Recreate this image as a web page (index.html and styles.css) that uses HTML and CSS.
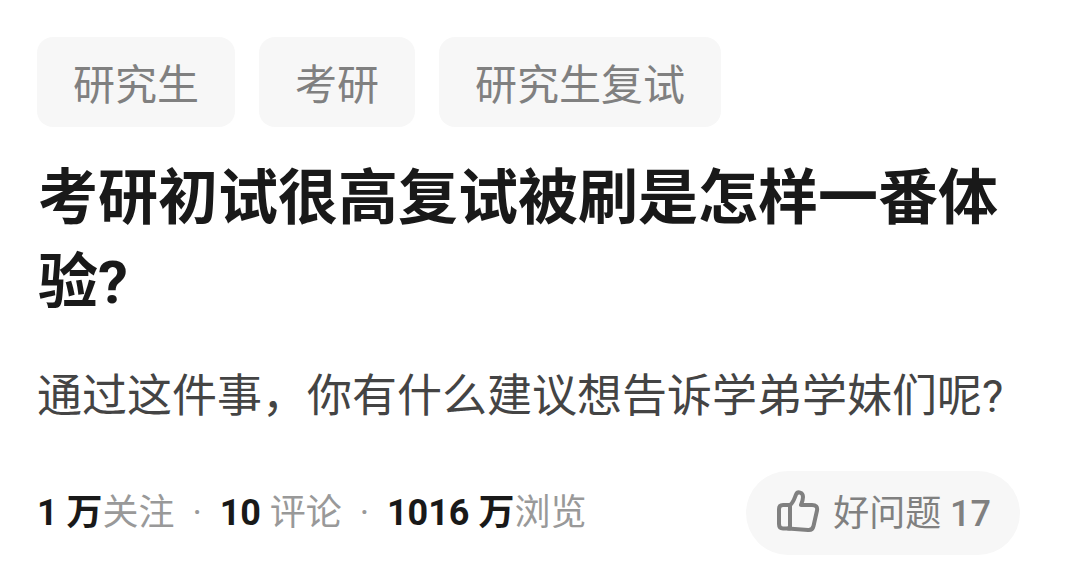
FILE: index.html
```html
<!DOCTYPE html>
<html lang="zh-CN">
<head>
    <meta charset="UTF-8">
    <meta name="viewport" content="width=device-width, initial-scale=1.0">
    <title>考研初试很高复试被刷是怎样一番体验?</title>
    <link rel="stylesheet" href="styles.css">
</head>
<body>
    <div class="question">
        <div class="tags">
            <a class="tag">研究生</a>
            <a class="tag">考研</a>
            <a class="tag">研究生复试</a>
        </div>

        <h1 class="title">考研初试很高复试被刷是怎样一番体验?</h1>

        <p class="detail">通过这件事，你有什么建议想告诉学弟学妹们呢?</p>

        <div class="footer">
            <div class="stats">
                <span class="stat"><b>1 万</b>关注</span>
                <span class="dot">·</span>
                <span class="stat"><b>10</b> 评论</span>
                <span class="dot">·</span>
                <span class="stat"><b>1016 万</b>浏览</span>
            </div>
            <button class="like-btn">
                <svg class="like-icon" viewBox="0 0 44 44" fill="none" stroke="#808080" stroke-width="4" stroke-linejoin="round" stroke-linecap="round">
                    <path d="M14 16H7Q3 16 3 20V35Q3 39.500 7 39.500H14"/>
                    <path d="M14 16V39"/>
                    <path d="M14 16C17.500 13.500 18.500 9 20 5.500C21.500 2 27 3 27 8C27 11 26 13.500 25 16H36Q42 16 41 21.500L37.500 37Q36.500 41.500 32 41L12 39.500"/>
                </svg>
                <span class="like-text">好问题 <span class="like-count">17</span></span>
            </button>
        </div>
    </div>
</body>
</html>
```

FILE: styles.css
```css
body {
    margin: 0;
    background: #fff;
    font-family: Roboto, "Noto Sans CJK SC", sans-serif;
}
.question {
    padding: 37px 48px 0 37px;
}
.tags {
    display: flex;
    gap: 24px;
}
.tag {
    height: 90px;
    padding: 0 36px;
    border-radius: 16px;
    background: #f7f7f7;
    color: #808080;
    font-size: 42px;
    line-height: 97px;
}
.title {
    margin: 30px 0 0;
    padding-left: 1px;
    color: #191919;
    font-size: 60px;
    font-weight: 700;
    line-height: 84px;
}
.detail {
    margin: 36px -20px 0 0;
    color: #444;
    font-size: 45px;
    line-height: 72px;
    white-space: nowrap;
}
.footer {
    display: flex;
    justify-content: space-between;
    align-items: center;
    margin-top: 38px;
}
.stats {
    display: flex;
    align-items: baseline;
    padding-bottom: 8px;
    color: #999;
    font-size: 36px;
    white-space: nowrap;
}
.stats b {
    color: #191919;
}
.dot {
    width: 45px;
    text-align: center;
}
.like-btn {
    display: flex;
    align-items: center;
    gap: 13px;
    height: 84px;
    padding: 0 29px 0 30px;
    border: none;
    border-radius: 42px;
    background: #f7f7f7;
    color: #808080;
    font-family: inherit;
    font-size: 36px;
}
.like-icon {
    width: 44px;
    height: 44px;
    margin-bottom: 4px;
}
.like-text {
    padding-bottom: 7px;
}
.like-count {
    font-weight: 500;
}
```
